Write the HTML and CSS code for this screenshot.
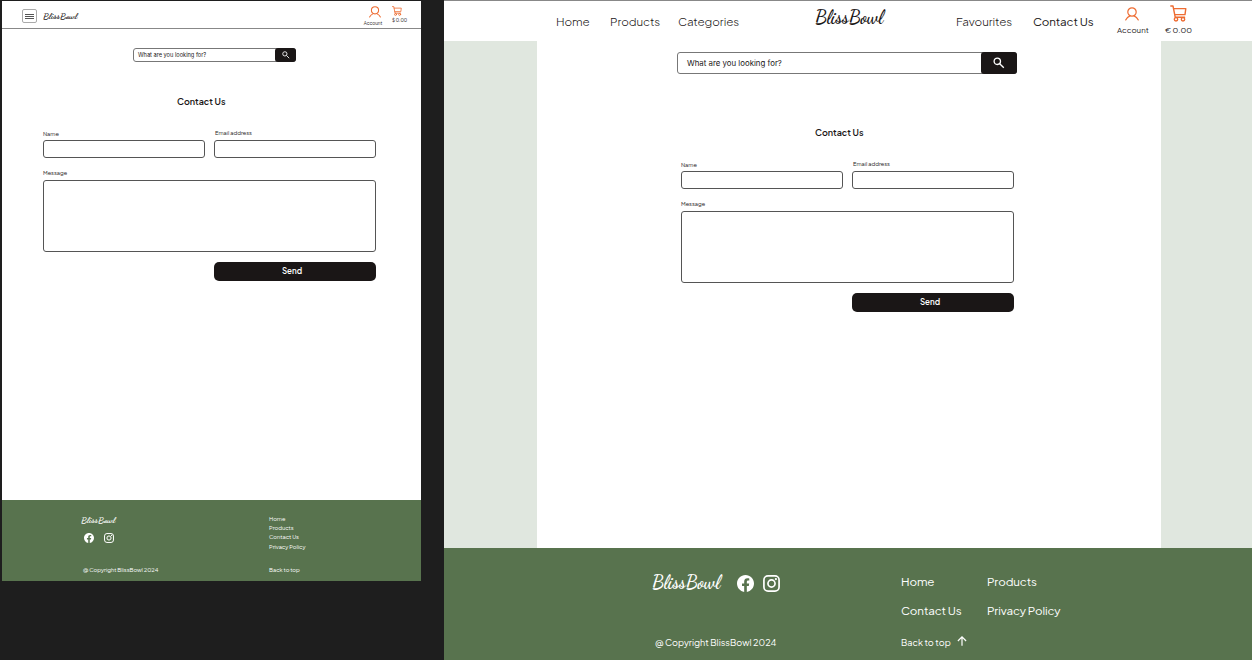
FILE: index.html
```html
<!DOCTYPE html>
<html lang="en">
<head>
<meta charset="utf-8">
<title>BlissBowl – Contact Us</title>
<link rel="stylesheet" href="styles.css">
</head>
<body>
<svg class="sprite" aria-hidden="true">
  <symbol id="user" viewBox="0 0 14 14"><g fill="none" stroke="#ee6c32" stroke-width="1.2" stroke-linecap="round"><circle cx="7" cy="5" r="4.2"/><path d="M.7 12.9C1.7 10.9 3.2 9.6 5 8.9M13.3 12.9C12.3 10.9 10.8 9.6 9 8.9"/></g></symbol>
  <symbol id="cart" viewBox="0 0 17 17"><g fill="none" stroke="#ee6c32" stroke-width="1.4" stroke-linecap="round" stroke-linejoin="round"><path d="M.8 1H3L5.2 12.2H14.6M3.6 3.6H15.8L15 9.6H4.8"/><circle cx="6" cy="14.3" r="1.7"/><circle cx="13" cy="14.3" r="1.7"/></g></symbol>
  <symbol id="search" viewBox="0 0 12 12"><g fill="none" stroke="#fff" stroke-width="1.3"><circle cx="4.3" cy="4.3" r="3.2"/><path d="M6.7 6.7L10.8 10.8"/></g></symbol>
  <symbol id="facebook" viewBox="0 0 24 24"><path fill="#fff" d="M24 12.07C24 5.4 18.63 0 12 0S0 5.4 0 12.07C0 18.1 4.39 23.1 10.13 24v-8.44H7.08v-3.49h3.05V9.41c0-3.02 1.79-4.69 4.53-4.69 1.31 0 2.68.24 2.68.24v2.97h-1.51c-1.49 0-1.96.93-1.96 1.89v2.25h3.33l-.53 3.49h-2.8V24C19.61 23.1 24 18.1 24 12.07z"/></symbol>
  <symbol id="instagram" viewBox="0 0 24 24"><g fill="none" stroke="#fff" stroke-width="2.4"><rect x="1.3" y="1.3" width="21.4" height="21.4" rx="5.8"/><circle cx="12" cy="12" r="5"/></g><circle cx="18.2" cy="5.8" r="1.6" fill="#fff"/></symbol>
  <symbol id="up" viewBox="0 0 10 10"><path d="M5 9.8V1M.9 5L5 .9 9.1 5" fill="none" stroke="#fff" stroke-width="1.2"/></symbol>
</svg>
<div class="board">
  <section class="tablet">
    <header class="tablet-header">
      <button class="menu" aria-label="Menu"><i></i><i></i><i></i></button>
      <span class="logo logo-small">BlissBowl</span>
      <a class="tablet-account"><svg><use href="#user"/></svg><span>Account</span></a>
      <a class="tablet-cart"><svg><use href="#cart"/></svg><span>$ 0.00</span></a>
    </header>
    <main class="tablet-main">
      <div class="search search-small"><span>What are you looking for?</span><button aria-label="Search"><svg><use href="#search"/></svg></button></div>
      <form class="contact">
        <h1>Contact Us</h1>
        <label class="name">Name</label><label class="email">Email address</label>
        <div class="field"></div><div class="field"></div>
        <label class="message">Message</label>
        <div class="field area"></div>
        <button type="button" class="send">Send</button>
      </form>
    </main>
    <footer class="tablet-footer">
      <div class="brand">
        <span class="logo logo-small">BlissBowl</span>
        <div class="social"><svg><use href="#facebook"/></svg><svg><use href="#instagram"/></svg></div>
        <span class="copyright">@ Copyright BlissBowl 2024</span>
      </div>
      <nav><a>Home</a><a>Products</a><a>Contact Us</a><a>Privacy Policy</a><a class="top">Back to top</a></nav>
    </footer>
  </section>
  <section class="desktop">
    <header class="desktop-header">
      <a class="light">Home</a><a class="light">Products</a><a class="light">Categories</a>
      <span class="logo">BlissBowl</span>
      <a class="light">Favourites</a><a>Contact Us</a>
      <a class="account"><svg><use href="#user"/></svg><span>Account</span></a>
      <a class="cart"><svg><use href="#cart"/></svg><span>€ 0.00</span></a>
    </header>
    <main class="desktop-main">
      <div class="page">
        <div class="search"><span>What are you looking for?</span><button aria-label="Search"><svg><use href="#search"/></svg></button></div>
        <form class="contact">
          <h1>Contact Us</h1>
          <label class="name">Name</label><label class="email">Email address</label>
          <div class="field"></div><div class="field"></div>
          <label class="message">Message</label>
          <div class="field area"></div>
          <button type="button" class="send">Send</button>
        </form>
      </div>
    </main>
    <footer class="desktop-footer">
      <div class="brand">
        <div class="brand-row"><span class="logo">BlissBowl</span><svg><use href="#facebook"/></svg><svg><use href="#instagram"/></svg></div>
        <span class="copyright">@ Copyright BlissBowl 2024</span>
      </div>
      <nav><a>Home</a><a>Products</a><a>Contact Us</a><a>Privacy Policy</a><a class="top"><span>Back to top</span><svg><use href="#up"/></svg></a></nav>
    </footer>
  </section>
</div>
</body>
</html>
```
FILE: styles.css
```css
* { box-sizing: border-box; }
body { margin: 0; background: #1e1e1e; color: #1a1616; font-family: "Plus Jakarta Sans", Inter, sans-serif; overflow: hidden; }
button { border: 0; padding: 0; font-family: inherit; }
svg { display: block; flex: none; }
a, span, label { white-space: nowrap; }
.sprite { position: absolute; width: 0; height: 0; }
.board { display: flex; gap: 23px; width: 1252px; height: 660px; padding-left: 2px; }
.logo { font: 700 18.3px/24px "Dancing Script", "Liberation Serif", serif; }
.logo-small { font-size: 9.2px; line-height: 13px; }

/* tablet */
.tablet { width: 419px; height: 580px; margin-top: 1px; background: #fff; display: flex; flex-direction: column; }
.tablet-header { height: 28px; border-bottom: 1px solid #888; display: flex; align-items: flex-start; padding-left: 20px; }
.menu { width: 15px; height: 14px; margin-top: 8px; border: 1px solid #aaa; border-radius: 2px; background: #fff; display: flex; flex-direction: column; align-items: center; justify-content: center; gap: 1px; }
.menu i { width: 9px; height: 1px; background: #555; }
.tablet-header .logo { margin: 9px 0 0 6px; width: 321px; }
.tablet-account, .tablet-cart { display: flex; flex-direction: column; align-items: center; font-size: 4.6px; line-height: 7px; }
.tablet-account { width: 18px; margin-top: 5px; }
.tablet-account svg { width: 12px; height: 12px; margin-left: 4px; }
.tablet-account span { margin-top: 2px; }
.tablet-cart { width: 15px; margin: 5px 0 0 10px; align-items: flex-start; }
.tablet-cart svg { width: 10px; height: 10px; }
.tablet-cart span { margin-top: 1px; }
.tablet-main { flex: 1; padding: 19px 0 0 41px; }
.search { width: 340px; height: 22px; margin-left: -4px; border: 1px solid #777; border-radius: 3px; display: flex; justify-content: space-between; align-items: center; font: 7.85px/12px Inter, sans-serif; padding-left: 9px; }
.search button { width: 36px; height: 22px; margin-right: -1px; background: #1a1616; border-radius: 3px; display: grid; place-items: center; }
.search svg { width: 12px; height: 12px; }
.search-small { width: 163px; height: 14px; margin-left: 90px; padding-left: 4px; font-size: 5.65px; }
.search-small span { margin-top: -1px; }
.search-small button { width: 21px; height: 14px; }
.search-small svg { width: 8px; height: 8px; }
.contact { width: 333px; display: grid; grid-template-columns: 162px 162px; column-gap: 9px; grid-template-rows: 12px 22px 11px 18px 9px 13px 72px 10px 19px; }
.tablet .contact { margin-top: 33px; }
.contact h1 { grid-column: 1 / 3; grid-row: 1; margin: 0 0 0 134px; font-size: 9px; font-weight: 600; line-height: 13px; }
.contact label { grid-row: 3; font-size: 5.6px; line-height: 10px; }
.contact .email { margin: -1px 0 0 1px; }
.field { grid-row: 4; border: 1px solid #555; border-radius: 3px; }
.contact .message { grid-column: 1; grid-row: 6; margin-top: 1px; }
.area { grid-column: 1 / 3; grid-row: 7; }
.send { grid-column: 2; grid-row: 9; padding: 0 6px 1px 0; border-radius: 5px; background: #1a1616; color: #fff; font-size: 8px; font-weight: 600; }
.tablet-footer, .desktop-footer { background: #58734e; color: #fff; display: flex; }
.tablet-footer { height: 81px; padding: 14px 0 0 79px; font-size: 5.65px; }
.tablet-footer .brand { width: 188px; }
.tablet-footer .logo { display: block; }
.social { display: flex; gap: 10px; margin: 6px 0 0 3px; }
.social svg { width: 10px; height: 10px; }
.tablet-footer .copyright { display: block; margin: 22px 0 0 2px; line-height: 10px; }
.tablet-footer nav { display: grid; grid-template-rows: repeat(4, 9.2px) 15px; line-height: 10px; height: 52px; }
.tablet-footer .top { margin-top: 14px; }

/* desktop */
.desktop { width: 808px; height: 660px; display: flex; flex-direction: column; background: #e0e7df; }
.desktop-header { height: 41px; background: #fff; border-top: 1px solid #888; display: grid; grid-template-columns: 54px 68px 137px 141px 77px 84px 48px 30px; padding-left: 112px; font-size: 11.6px; letter-spacing: -.12px; line-height: 16px; }
.desktop-header > a { margin-top: 13px; }
.light { font-weight: 350; letter-spacing: -.08px; }
.desktop-header .logo { margin-top: 4px; letter-spacing: 0; }
.desktop-header .account, .desktop-header .cart { margin-top: 5px; display: flex; flex-direction: column; font-size: 7.9px; letter-spacing: 0; line-height: 11px; }
.account svg { width: 14px; height: 14px; margin: 1px 0 4px 8px; }
.cart svg { width: 17px; height: 17px; margin: -1px 0 3px 5px; }
.desktop-main { height: 507px; padding-left: 93px; }
.page { width: 624px; height: 507px; background: #fff; padding: 11px 0 0 144px; }
.page .search span { margin-top: -1px; }
.page .contact { margin-top: 52px; }
.desktop-footer { height: 112px; padding: 22px 0 0 208px; }
.desktop-footer .brand { width: 249px; }
.brand-row { display: flex; height: 24px; align-items: center; }
.brand-row .logo { width: 85px; }
.brand-row svg { width: 17px; height: 17px; margin: 3px 9px 0 0; }
.desktop-footer .copyright { display: block; margin: 42px 0 0 3px; font-size: 9.1px; line-height: 13px; }
.desktop-footer nav { display: grid; grid-template-columns: 86px 90px; grid-template-rows: 28.5px 32px 20px; font-size: 11.6px; letter-spacing: -.1px; line-height: 23px; }
.desktop-footer .top { grid-column: 1; display: flex; align-items: flex-start; gap: 6px; font-size: 9.1px; letter-spacing: 0; line-height: 24px; }
.desktop-footer .top svg { width: 10px; height: 10px; margin-top: 5px; }
```
